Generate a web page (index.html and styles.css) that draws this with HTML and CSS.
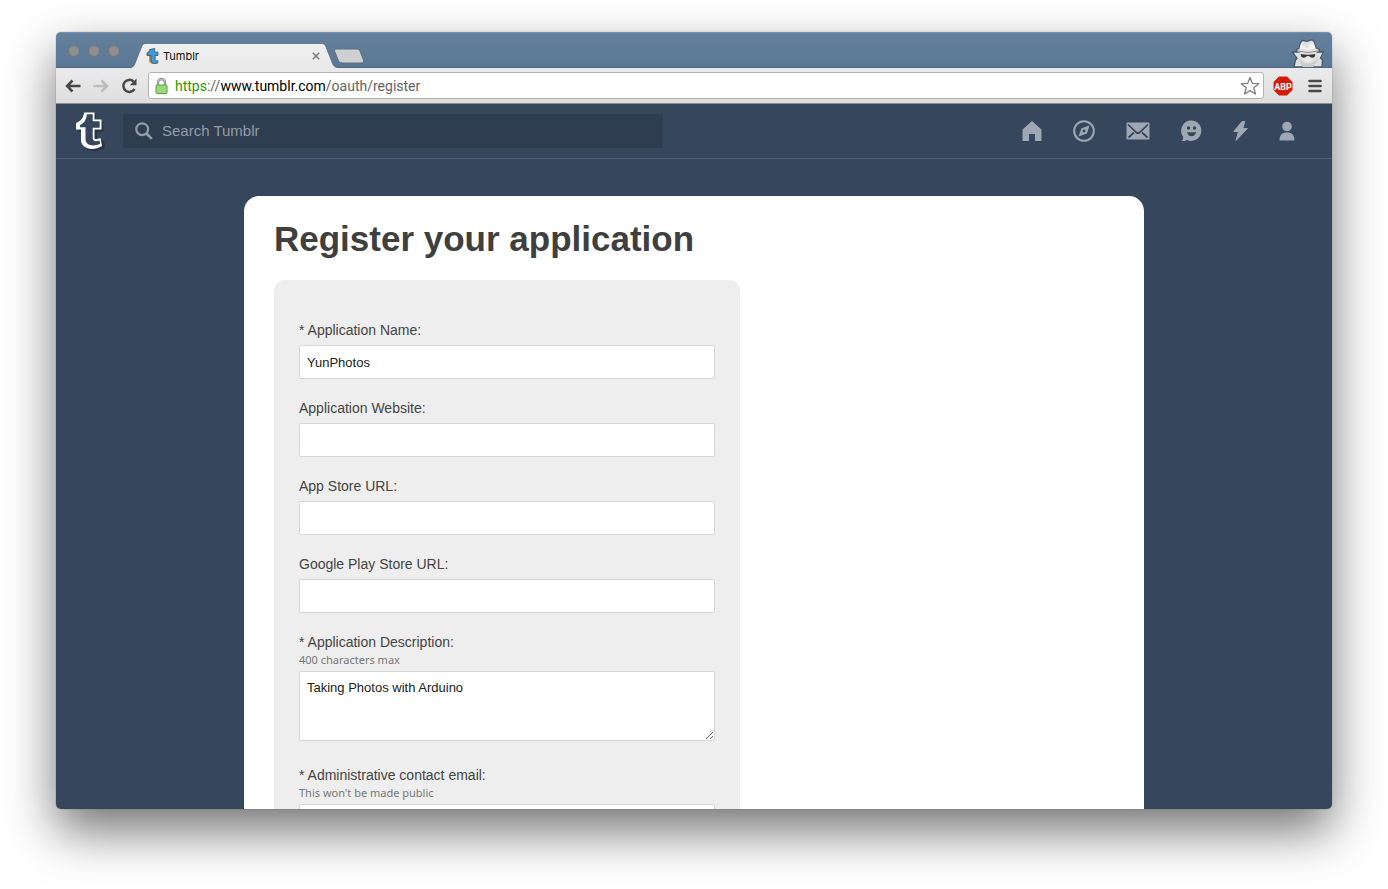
FILE: index.html
```
<!DOCTYPE html>
<html lang="en">
<head>
<meta charset="utf-8">
<title>Tumblr</title>
<link rel="stylesheet" href="styles.css">
</head>
<body>
<div class="window">
  <div class="titlebar">
    <div class="lights">
      <button class="light" aria-label="Close"></button>
      <button class="light" aria-label="Minimize"></button>
      <button class="light" aria-label="Zoom"></button>
    </div>
    <div class="tab">
      <svg class="tab-shape" viewBox="0 0 208 25" aria-hidden="true">
        <defs><linearGradient id="tabfill" x1="0" y1="0" x2="0" y2="1"><stop offset="0" stop-color="#f1f1f1"/><stop offset="1" stop-color="#e9e9e9"/></linearGradient></defs>
        <path d="M0 25C3 24.500 4 23 5 20.500L11.500 4C12.500 1.500 13.500.5 16 .5H191C194 .5 195 1.500 196 4L202.500 20.500C203.500 23 205 24.500 208 25Z" fill="url(#tabfill)"/>
        <path d="M0 24.500C3 24 4 23 5 20.500L11.500 4C12.500 1.500 13.500.5 16 .5H191C194 .5 195 1.500 196 4L202.500 20.500C203.500 23 205 24 208 24.500" fill="none" stroke="#4c657f" stroke-width=".7"/>
      </svg>
      <svg class="favicon" width="13" height="16" viewBox="0 0 13 16" aria-hidden="true">
        <path d="M4 .8h4v3.700h3.500v3H8.300v4.300c0 1 1 1.200 3 .8V15c-4 1.200-7.300.2-7.300-3V7.500H1.500V4.800C3.200 4.300 3.900 3 4 .8Z" fill="#d38a3a" transform="translate(-1 .5)"/>
        <path d="M4 1.500 8.700.5V4.200H12v3.300H9.200v4.300c0 1 .8 1.200 2.600.7V15c-4.200 1.200-6.800.2-6.800-3V7.500H1.300V4.500C3 4 3.900 3.500 4 1.500Z" fill="#3c9ad6" stroke="#3b5f7b" stroke-width=".9"/>
      </svg>
      <span class="tab-title">Tumblr</span>
      <button class="tab-close" aria-label="Close tab"><svg width="8" height="8" viewBox="0 0 8 8"><path d="M.8.8 7.200 7.200M7.200.8.8 7.200" stroke="#777" stroke-width="1.500"/></svg></button>
    </div>
    <button class="new-tab" aria-label="New tab"><svg width="32" height="16" viewBox="0 0 32 16"><path d="M3 1H24Q26 1 27 3L30.500 12Q31.500 15 29 15H9Q6.500 15 5.500 13L1.500 3Q.8 1 3 1Z" fill="#cfcfcf" stroke="#5b7187"/></svg></button>
    <svg class="incognito" width="34" height="28" viewBox="0 0 34 28" aria-hidden="true">
      <path d="M8 9.500 10 3Q10.500 1.300 12.500 1.500L16 2.300 20 1Q22 .7 22.800 2.500L25 8.800Q29 10 28.500 12L27 13 32.500 13 29.500 19 31.500 21 31 28H3L4.500 21 6 19.500 1.500 13 7 13 5.500 12Q5 10 8 9.500Z" fill="#e0e0e0" stroke="#46586b" stroke-width="1.300"/>
      <path d="M10.200 3.500 8.500 9.500Q17 12 24.500 9L22.500 3Q18 4.500 17 9Q13 9 10.200 3.500Z" fill="#f2f2f2"/>
      <path d="M6 12Q17 15 28 12" stroke="#8e8e8e" fill="none"/>
      <path d="M9.500 15Q17 16.500 24.500 15L23.500 18Q20.500 20 18 17H16Q13.500 20 10.500 18Z" fill="#383838"/>
      <path d="M7 19 12 28H22L28 19 20 24.500H14Z" fill="#ccc"/>
      <path d="M11 19.500Q17 26.500 23 19.500L20 19.500 17 18.500 14 19.500Z" fill="#ececec"/>
    </svg>
  </div>

  <div class="toolbar">
    <div class="nav-buttons">
      <button aria-label="Back"><svg width="16" height="14" viewBox="0 0 16 14"><path d="M7.500 1.500 2 7l5.500 5.500M2.500 7H15.500" stroke="#484848" stroke-width="2.500" fill="none"/></svg></button>
      <button aria-label="Forward"><svg width="16" height="14" viewBox="0 0 16 14"><path d="M8.500 1.500 14 7 8.500 12.500M13.500 7H.5" stroke="#bdbdbd" stroke-width="2.500" fill="none"/></svg></button>
      <button aria-label="Reload"><svg width="16" height="16" viewBox="0 0 16 16"><path d="M13.500 11A6 6 0 1 1 12.500 3.500" stroke="#484848" stroke-width="2.500" fill="none"/><path d="M15.500.5V7.200H8.800Z" fill="#484848"/></svg></button>
    </div>
    <div class="omnibox">
      <svg width="13" height="16" viewBox="0 0 13 16" aria-hidden="true"><path d="M3 8V4.500a3.500 3.500 0 0 1 7 0V8" fill="none" stroke="#808080" stroke-width="2.400"/><path d="M3 8V4.500a3.500 3.500 0 0 1 7 0V8" fill="none" stroke="#ddd" stroke-width=".8"/><rect x="1" y="7" width="11" height="8.500" rx="1" fill="#98d97a" stroke="#5d9f43"/></svg>
      <div class="address" role="textbox" aria-label="Address" tabindex="0"><span class="scheme">https</span>://<span class="host">www.tumblr.com</span>/oauth/register</div>
      <button aria-label="Bookmark"><svg width="20" height="20" viewBox="0 0 20 20"><path d="M10 1.500 12.300 7.300 18.800 7.700 13.800 11.800 15.500 18 10 14.600 4.500 18 6.200 11.800 1.200 7.700 7.700 7.300Z" fill="#fff" stroke="#808080" stroke-width="1.300" stroke-linejoin="round"/></svg></button>
    </div>
    <button aria-label="AdBlock Plus"><svg width="20" height="20" viewBox="0 0 20 20"><path d="M6 .5H14L19.500 6V14L14 19.500H6L.5 14V6Z" fill="#d51c07"/><text class="abp" x="10" y="13.500" text-anchor="middle">ABP</text></svg></button>
    <button aria-label="Menu"><svg width="14" height="14" viewBox="0 0 14 14"><path d="M1.500 2H12.500M1.500 7H12.500M1.500 12H12.500" stroke="#484848" stroke-width="2.600" stroke-linecap="round"/></svg></button>
  </div>

  <div class="page">
    <header class="site-header">
      <a class="logo" href="#" aria-label="Tumblr"><svg width="31" height="40" viewBox="0 0 31 40">
        <path d="M9.500 2H19V9H26.500V19H20V26C20 28 22 28.500 27 27L28 35C18 41 6 38 6 28V18.500H1.500V12C6.500 10 9 8 9.500 2Z" fill="#283648" transform="translate(2 2)"/>
        <path d="M9 1.500H19.500V8.500H26.500V18.500H19.500V27C19.500 28.500 21.500 28.500 25.500 27L27 35C18 40.500 6 38 6 29V18.500H1V12C6 10 8.500 7 9 1.500Z" fill="#fff"/>
        <path d="M11.800 3.300H17.700V10.300H24.700V16.700H17.700V27C17.700 30 20 31 24.500 29.500L25.200 33C17 36 10.500 34 10.500 28V16.300H5V14C9.500 12 11.300 9 11.800 3.300Z" fill="#36465d"/>
      </svg></a>
      <label class="search">
        <svg width="18" height="18" viewBox="0 0 18 18" aria-hidden="true"><circle cx="7.200" cy="7.200" r="5.900" fill="none" stroke="#949ba8" stroke-width="2.200"/><path d="M11.500 11.500 16.800 16.800" stroke="#949ba8" stroke-width="2.600"/></svg>
        <input type="text" placeholder="Search Tumblr" aria-label="Search Tumblr">
      </label>
      <nav class="site-nav">
        <a href="#" aria-label="Dashboard"><svg width="20" height="22" viewBox="0 0 20 22"><path d="M10 1 19.500 9.500V21H13V14H7V21H.5V9.500Z"/></svg></a>
        <a href="#" aria-label="Explore"><svg width="22" height="22" viewBox="0 0 22 22"><circle cx="11" cy="11" r="9.800" fill="none" stroke="#9fa7b3" stroke-width="2"/><path d="M16.500 5.500 14 13.500 5.500 16.500 8.500 8.200ZM11 9.600a1.400 1.400 0 1 0 0 2.800a1.400 1.400 0 0 0 0-2.800Z" fill-rule="evenodd"/></svg></a>
        <a href="#" aria-label="Inbox"><svg width="24" height="18" viewBox="0 0 24 18"><rect x=".5" y=".5" width="23" height="17" rx="1"/><path d="M2 2.500 10.500 10.500Q12 11.800 13.500 10.500L22 2.500M2.500 15.500 8 10.500M21.500 15.500 16 10.500" fill="none" stroke="#36465d" stroke-width="1.700"/></svg></a>
        <a href="#" aria-label="Messages"><svg width="21" height="22" viewBox="0 0 21 22"><path d="M10.500.5A10.200 10.200 0 1 1 6 20C4.500 21 2.500 21 .8 21 2 19.500 2.500 18 2 16.500A10.200 10.200 0 0 1 10.500.5Z"/><circle cx="7.500" cy="8" r="1.700" fill="#36465d"/><circle cx="13.500" cy="8" r="1.700" fill="#36465d"/><path d="M6 12.300H15Q14 16.300 10.500 16.300T6 12.300Z" fill="#36465d"/></svg></a>
        <a href="#" aria-label="Activity"><svg width="15" height="20" viewBox="0 0 15 20"><path d="M9 .5 .8 10.500H5.500L3 19.500 14.300 7.500H9.800L11.800.5Z" stroke="#9fa7b3" stroke-linejoin="round"/></svg></a>
        <a href="#" aria-label="Account"><svg width="16" height="20" viewBox="0 0 16 20"><circle cx="8" cy="5.500" r="4.800"/><path d="M.5 19.500C.5 14 3 11.500 8 11.500S15.500 14 15.500 19.500Z"/></svg></a>
      </nav>
    </header>
    <main class="card">
      <h1>Register your application</h1>
      <form class="panel">
        <div class="field">
          <label for="name">* Application Name:</label>
          <input id="name" type="text" value="YunPhotos">
        </div>
        <div class="field">
          <label for="site">Application Website:</label>
          <input id="site" type="text">
        </div>
        <div class="field">
          <label for="appstore">App Store URL:</label>
          <input id="appstore" type="text">
        </div>
        <div class="field">
          <label for="play">Google Play Store URL:</label>
          <input id="play" type="text">
        </div>
        <div class="field hinted">
          <label for="desc">* Application Description:<small>400 characters max</small></label>
          <textarea id="desc">Taking Photos with Arduino</textarea>
        </div>
        <div class="field hinted">
          <label for="email">* Administrative contact email:<small>This won't be made public</small></label>
          <input id="email" type="text">
        </div>
      </form>
    </main>
  </div>
</div>
</body>
</html>
```
FILE: styles.css
```
* { box-sizing: border-box; }

body {
  margin: 0;
  height: 100vh;
  padding: 32px 56px 80px;
  overflow: hidden;
  background: #fff;
  font-family: "Liberation Sans", Arial, sans-serif;
}

svg { display: block; }

button {
  padding: 0;
  border: 0;
  background: none;
}

.window {
  display: flex;
  flex-direction: column;
  height: 100%;
  overflow: hidden;
  border-radius: 5px;
  box-shadow: 0 0 1px rgba(0, 0, 0, .6), 0 22px 50px rgba(0, 0, 0, .55);
}

/* Browser chrome */
.titlebar {
  display: flex;
  align-items: flex-end;
  height: 36px;
  flex: none;
  padding: 0 7px 0 12px;
  background: linear-gradient(#65809d, #5a7795);
  border-top: 1px solid #7390ab;
  border-bottom: 1px solid #506a85;
}

.lights {
  display: flex;
  gap: 8px;
  padding-bottom: 10px;
}

.light {
  width: 12px;
  height: 12px;
  border: 1px solid #737679;
  border-radius: 50%;
  background: #8e8e8e;
}

.tab {
  position: relative;
  display: flex;
  align-items: center;
  width: 208px;
  height: 25px;
  margin: 0 0 -1px 10px;
  padding: 0 18px 0 16px;
  gap: 4px;
}

.tab-shape {
  position: absolute;
  inset: 0;
}

.favicon, .tab-title, .tab-close { position: relative; }

.tab-title {
  flex: 1;
  font: 11px/16px Inter, sans-serif;
  color: #111;
}

.new-tab { padding: 0 0 3px; margin-left: -5px; }

.incognito { margin-left: auto; }

.toolbar {
  display: flex;
  align-items: center;
  flex: none;
  height: 36px;
  padding: 0 10px 0 9px;
  gap: 15px;
  background: linear-gradient(#ebebeb, #dedede);
  border-bottom: 1px solid #8d8d8d;
}

.nav-buttons {
  display: flex;
  align-items: center;
  gap: 12px;
}

.omnibox {
  display: flex;
  align-items: center;
  flex: 1;
  height: 27px;
  margin: 0 -6px 0 -4px;
  padding: 0 3px 0 6px;
  gap: 7px;
  background: #fff;
  border: 1px solid #b3b3b3;
  border-radius: 3px;
}

.address {
  flex: 1;
  font: 14px/20px Roboto, sans-serif;
  color: #646464;
}

.scheme { color: #2b9a0c; }
.host { color: #000; }

.abp {
  font: bold 9px Roboto, sans-serif;
  fill: #fff;
}

/* Site */
.page {
  flex: 1;
  min-height: 0;
  overflow: hidden;
  background: #36465d;
}

.site-header {
  display: flex;
  align-items: center;
  height: 55px;
  padding: 0 37px 0 19px;
  border-bottom: 1px solid #4f5f77;
}

.search {
  display: flex;
  align-items: center;
  flex: 0 1 540px;
  height: 34px;
  margin-left: 17px;
  padding: 0 12px;
  gap: 9px;
  border-radius: 2px;
  background: #2f3d51;
}

.search input {
  flex: 1;
  min-width: 0;
  padding: 0;
  border: 0;
  outline: 0;
  background: none;
  color: #fff;
  font: 15px/20px "Liberation Sans", Arial, sans-serif;
}

.search input::placeholder { color: #949ca8; }

.site-nav {
  display: flex;
  align-items: center;
  gap: 31px;
  margin-left: auto;
  fill: #9fa7b3;
}

.card {
  max-width: 900px;
  margin: 37px auto 0;
  padding: 21px 30px 40px;
  border-radius: 15px;
  background: #fff;
}

h1 {
  margin: 0 0 19px;
  font-size: 35px;
  line-height: 44px;
  color: #3f3f3f;
}

.panel {
  display: flex;
  flex-direction: column;
  max-width: 466px;
  padding: 41px 25px;
  gap: 20px;
  border-radius: 10px;
  background: #eee;
}

.field {
  display: flex;
  flex-direction: column;
  gap: 6px;
}

.hinted { gap: 2px; }

.hinted + .hinted { margin-top: 5px; }

.field label {
  font-size: 14px;
  line-height: 18px;
  color: #444;
}

.field small {
  display: block;
  font: 11px/18px "Noto Sans", sans-serif;
  color: #777;
}

.field input, .field textarea {
  width: 100%;
  height: 34px;
  padding: 0 7px;
  border: 1px solid #d5d7da;
  border-radius: 2px;
  outline: 0;
  background: #fff;
  color: #222;
  font: 13px/16px "Liberation Sans", Arial, sans-serif;
}

.field textarea {
  height: 70px;
  padding: 8px 7px;
}
```
